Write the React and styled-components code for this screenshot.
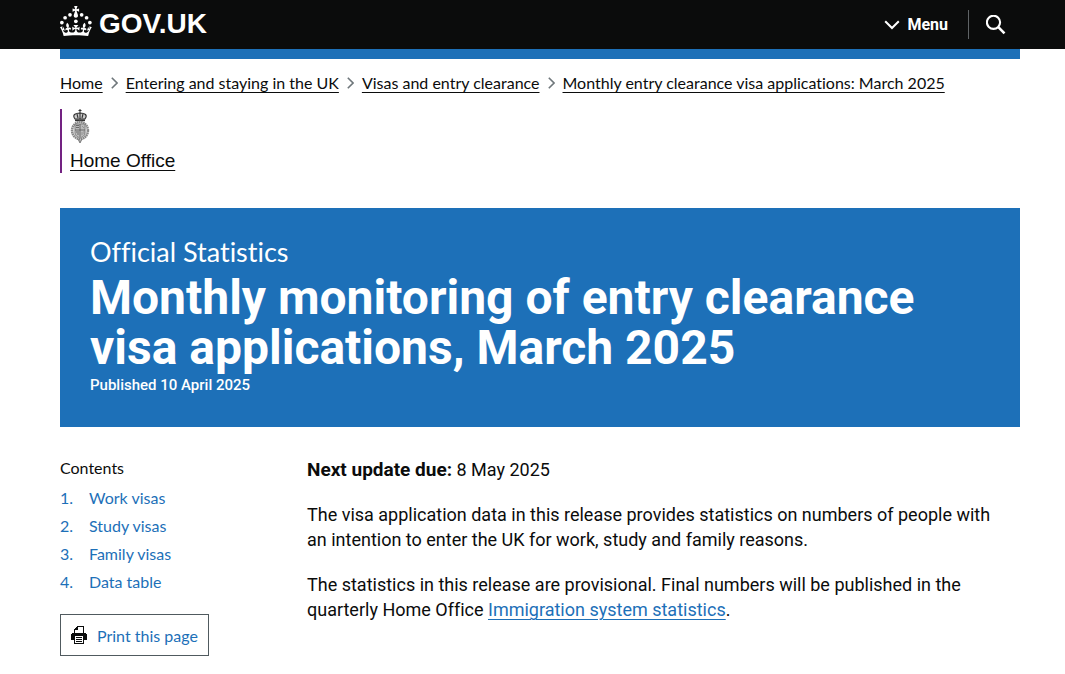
import React from "react";
import styled, { createGlobalStyle } from "styled-components";

const GlobalStyle = createGlobalStyle`
  body {
    margin: 0;
    background: #fff;
    color: #0b0c0c;
    font-family: Lato, sans-serif;
    font-size: 16px;
    line-height: 20px;
    font-variant-ligatures: none;
  }
`;

const Header = styled.header`
  padding: 0 45px 0 60px;
  background: #0b0c0c;
`;

const HeaderInner = styled.div`
  max-width: 960px;
  height: 49px;
  display: flex;
  align-items: center;
  justify-content: space-between;
`;

const LogoLink = styled.a`
  display: flex;
  align-items: flex-start;
  gap: 7px;
  padding-bottom: 1px;
  color: #fff;
  font-family: "Liberation Sans", sans-serif;
  font-size: 28px;
  font-weight: bold;
  line-height: 36px;
  text-decoration: none;
`;

const HeaderNav = styled.nav`
  display: flex;
  align-items: center;
`;

const HeaderButton = styled.button`
  display: flex;
  align-items: center;
  gap: 7px;
  height: 29px;
  padding: 0 20px 0 0;
  border: 0;
  background: none;
  color: #fff;
  font-family: Roboto, sans-serif;
  font-size: 16px;
  font-weight: bold;
  cursor: pointer;
`;

const SearchButton = styled(HeaderButton)`
  padding: 0 14px 0 17px;
  border-left: 1px solid #5f6366;
`;

const Page = styled.div`
  padding: 0 45px 0 60px;
`;

const Container = styled.div`
  max-width: 960px;
`;

const BlueBar = styled.div`
  height: 10px;
  background: #1d70b8;
`;

const Crumbs = styled.ol`
  display: flex;
  flex-wrap: wrap;
  gap: 8px;
  margin: 0;
  padding: 14px 0 0;
  list-style: none;
`;

const Crumb = styled.li`
  display: flex;
  align-items: center;
  gap: 8px;
`;

const DarkLink = styled.a`
  color: #0b0c0c;
  text-decoration: underline;
  text-decoration-thickness: 1px;
  text-underline-offset: 3px;
`;

const Organisation = styled.div`
  display: flex;
  flex-direction: column;
  align-items: flex-start;
  margin-top: 16px;
  padding-left: 8px;
  border-left: 2px solid #732282;
  font-family: "Liberation Sans", sans-serif;
  font-size: 19px;
  line-height: 25px;
`;

const OrgLink = styled(DarkLink)`
  margin-top: 4px;
`;

const Banner = styled.header`
  margin-top: 35px;
  padding: 30px;
  background: #1d70b8;
  color: #fff;
`;

const Kicker = styled.p`
  margin: 0;
  font-size: 27px;
  line-height: 28px;
`;

const Title = styled.h1`
  margin: 7px 0 0;
  font-family: Roboto, sans-serif;
  font-size: 48px;
  font-weight: bold;
  line-height: 50px;
`;

const Published = styled.p`
  margin: 0;
  font-family: Roboto, sans-serif;
  font-size: 15px;
  font-weight: 500;
  line-height: 24px;
`;

const Columns = styled.div`
  display: grid;
  grid-template-columns: 217px minmax(0, 1fr);
  gap: 30px;
  padding-top: 30px;
`;

const Contents = styled.nav`
  padding-top: 1px;
`;

const ContentsTitle = styled.h2`
  margin: 0 0 6px;
  font-size: 16px;
  font-weight: normal;
`;

const ContentsList = styled.ol`
  margin: 0;
  padding: 0;
  list-style: none;
  counter-reset: section;
`;

const ContentsItem = styled.li`
  display: flex;
  padding: 4px 0;
  color: #1d70b8;
  counter-increment: section;

  &::before {
    content: counter(section) ".";
    width: 29px;
  }
`;

const BlueLink = styled.a`
  color: #1d70b8;
  text-decoration: ${props => (props.$underlined ? "underline" : "none")};
  text-decoration-thickness: 1px;
  text-underline-offset: 3px;
`;

const PrintButton = styled.button`
  display: flex;
  align-items: center;
  gap: 10px;
  height: 42px;
  margin-top: 18px;
  padding: 0 10px;
  border: 1px solid #505a5f;
  background: #fff;
  color: #1d70b8;
  font-family: inherit;
  font-size: 16px;
  cursor: pointer;
`;

const Article = styled.main`
  padding-right: 15px;
  font-family: Roboto, sans-serif;
  font-size: 18px;
  line-height: 25px;

  p {
    margin: 0 0 20px;
  }

  strong {
    font-size: 19px;
  }
`;

const Crown = () => (
  <svg width="32" height="30" viewBox="0 0 64 60" fill="currentColor" aria-hidden="true">
    <circle cx="20" cy="17.6" r="3.7" />
    <circle cx="10.2" cy="23.5" r="3.7" />
    <circle cx="3.7" cy="33.2" r="3.7" />
    <circle cx="31.7" cy="30.6" r="3.7" />
    <circle cx="43.3" cy="17.6" r="3.7" />
    <circle cx="53.2" cy="23.5" r="3.7" />
    <circle cx="59.7" cy="33.2" r="3.7" />
    <path d="M33.1,9.8c.2-.1.3-.3.5-.5l4.6,2.4v-6.8l-4.6,1.5c-.1-.2-.3-.3-.5-.5l1.9-5.9h-6.7l1.9,5.9c-.2.1-.3.3-.5.5l-4.6-1.5v6.8l4.6-2.4c.1.2.3.3.5.5l-2.6,8c-.9,2.8,1.2,5.7,4.1,5.7h0c3,0,5.1-2.9,4.1-5.7l-2.6-8ZM37,37.9s-3.4,3.8-4.1,6.1c2.2,0,4.2-.5,6.4-2.8l-.7,8.5c-2-2.8-4.4-4.1-5.7-3.8.1,3.1.5,6.7,5.8,7.2,3.7.3,6.7-1.5,7-3.8.4-2.6-2-4.3-3.7-1.6-1.4-4.5,2.4-6.1,4.9-3.2-1.9-4.5-1.8-7.7,2.4-10.9,3,4,2.6,7.3-1.2,11.1,2.4-1.3,6.2,0,4,4.6-1.2-2.8-3.7-2.2-4.2.2-.3,1.7.7,3.7,3,4.2,1.9.3,4.7-.9,7-5.9-1.3,0-2.4.7-3.9,1.7l2.4-8c.6,2.3,1.4,3.7,2.2,4.5.6-1.6.5-2.8,0-5.3l5,1.8c-2.6,3.6-5.2,8.7-7.3,17.5-7.4-1.1-15.7-1.7-24.5-1.7h0c-8.8,0-17.1.6-24.5,1.7-2.1-8.9-4.7-13.9-7.3-17.5l5-1.8c-.5,2.5-.6,3.7,0,5.3.8-.8,1.6-2.3,2.2-4.5l2.4,8c-1.5-1-2.6-1.7-3.9-1.7,2.3,5,5.2,6.2,7,5.9,2.3-.4,3.3-2.4,3-4.2-.5-2.4-3-3.1-4.2-.2-2.2-4.6,1.6-6,4-4.6-3.7-3.7-4.2-7.1-1.2-11.1,4.2,3.2,4.3,6.4,2.4,10.9,2.5-2.8,6.3-1.3,4.9,3.2-1.8-2.7-4.1-1-3.7,1.6.3,2.3,3.3,4.1,7,3.8,5.4-.5,5.7-4.2,5.8-7.2-1.3-.2-3.7,1-5.7,3.8l-.7-8.5c2.2,2.3,4.2,2.7,6.4,2.8-.7-2.3-4.1-6.1-4.1-6.1h10.6,0Z" />
  </svg>
);

const DownChevron = () => (
  <svg width="16" height="10" viewBox="0 0 16 10" fill="none" stroke="currentColor" strokeWidth="2" aria-hidden="true">
    <path d="M1.2 1.2 8 8l6.8-6.8" />
  </svg>
);

const SearchIcon = () => (
  <svg width="20" height="20" viewBox="0 0 20 20" fill="none" stroke="currentColor" strokeWidth="2.1" aria-hidden="true">
    <circle cx="7.5" cy="7.3" r="6.6" />
    <path d="M12.1 11.9 18.5 18.3" strokeWidth="2.6" />
  </svg>
);

const CrumbArrow = () => (
  <svg width="7" height="12" viewBox="0 0 7 12" fill="none" stroke="#6f777b" strokeWidth="1.6" aria-hidden="true">
    <path d="M.8.8 6 6 .8 11.2" />
  </svg>
);

// Small royal crest: crown, supporters round a quartered shield, and a pendant
const Crest = () => (
  <svg width="20" height="35" viewBox="0 0 20 35" fill="none" stroke="#333" aria-hidden="true">
    <path d="M10 0v4M8.5 1.5h3" strokeWidth="1" />
    <path d="M5 10C2 6 5 4 10 4s8 2 5 6zM10 4v6M7 5l1 4M13 5l-1 4" strokeWidth="1.1" fill="#ccc" />
    <path d="M5 11.3h10" strokeWidth="1.8" />
    <ellipse cx="10" cy="21.5" rx="8" ry="8.6" stroke="#888" strokeWidth="2.4" strokeDasharray="1.6 .5" fill="#ddd" />
    <path d="M5 15h10v9c0 3-3 4-5 5-2-1-5-2-5-5z" fill="#bbb" stroke="#777" strokeWidth=".8" />
    <path d="M10 15v13M5 21h10M6 16.5h3M6 18.5h3M6 23h3M7 25h2" stroke="#555" strokeWidth=".8" />
    <path d="M12 23v3M14 22v3M12 17l2 2" stroke="#888" strokeWidth=".8" />
    <path d="M8 30l2 4 2-4M9 32h2" stroke="#777" strokeWidth="1" />
  </svg>
);

const Printer = () => (
  <svg width="16" height="18" viewBox="0 0 16 18" shapeRendering="crispEdges" aria-hidden="true">
    <path d="M6 0h7v7H3V3h1V2h1V1h1z" fill="#0b0c0c" />
    <path d="M7 1h5v6H4V4h3z" fill="#fff" />
    <path d="M1 7h14v1h1v6H0V8h1z" fill="#0b0c0c" />
    <path d="M3 10h10v8H3z" fill="#0b0c0c" />
    <path d="M4 10h8v7H4z" fill="#fff" />
    <path d="M5 11h6v1H5zM5 13h6v1H5zM5 15h6v1H5z" fill="#0b0c0c" />
  </svg>
);

const crumbs = [
  "Home",
  "Entering and staying in the UK",
  "Visas and entry clearance",
  "Monthly entry clearance visa applications: March 2025"
];

const sections = ["Work visas", "Study visas", "Family visas", "Data table"];

const App = () => {
  return (
    <>
      <GlobalStyle />
      <Header>
        <HeaderInner>
          <LogoLink href="#">
            <Crown />
            GOV.UK
          </LogoLink>
          <HeaderNav aria-label="Menu">
            <HeaderButton type="button">
              <DownChevron />
              Menu
            </HeaderButton>
            <SearchButton type="button" aria-label="Search GOV.UK">
              <SearchIcon />
            </SearchButton>
          </HeaderNav>
        </HeaderInner>
      </Header>

      <Page>
        <Container>
          <BlueBar />
          <nav aria-label="Breadcrumb">
            <Crumbs>
              {crumbs.map((crumb, i) => (
                <Crumb key={crumb}>
                  {i > 0 && <CrumbArrow />}
                  <DarkLink href="#">{crumb}</DarkLink>
                </Crumb>
              ))}
            </Crumbs>
          </nav>

          <Organisation>
            <Crest />
            <OrgLink href="#">Home Office</OrgLink>
          </Organisation>

          <Banner>
            <Kicker>Official Statistics</Kicker>
            <Title>Monthly monitoring of entry clearance visa applications, March 2025</Title>
            <Published>Published 10 April 2025</Published>
          </Banner>

          <Columns>
            <Contents aria-label="Contents">
              <ContentsTitle>Contents</ContentsTitle>
              <ContentsList>
                {sections.map(section => (
                  <ContentsItem key={section}>
                    <BlueLink href="#">{section}</BlueLink>
                  </ContentsItem>
                ))}
              </ContentsList>
              <PrintButton type="button">
                <Printer />
                Print this page
              </PrintButton>
            </Contents>

            <Article>
              <p><strong>Next update due:</strong> 8 May 2025</p>
              <p>
                The visa application data in this release provides statistics on numbers of people with
                an intention to enter the UK for work, study and family reasons.
              </p>
              <p>
                The statistics in this release are provisional. Final numbers will be published in the
                quarterly Home Office <BlueLink href="#" $underlined>Immigration system statistics</BlueLink>.
              </p>
            </Article>
          </Columns>
        </Container>
      </Page>
    </>
  );
};

export default App;
